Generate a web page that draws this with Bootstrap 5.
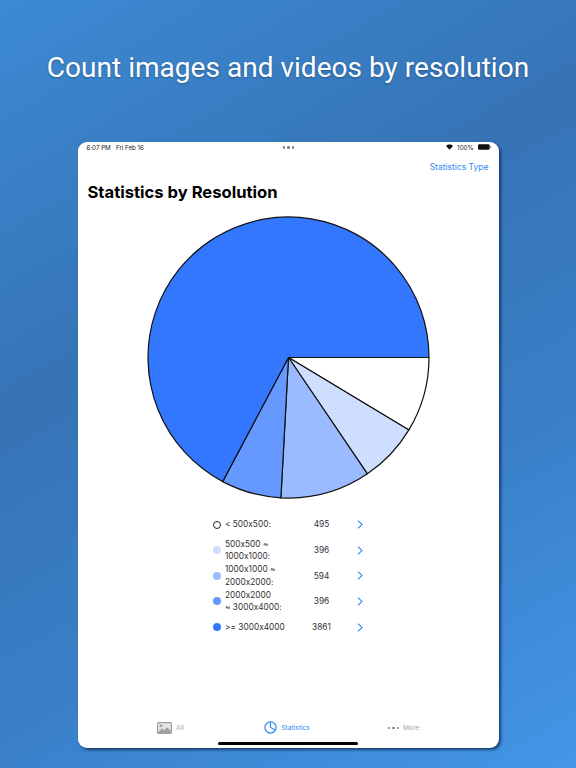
<!DOCTYPE html>
<html lang="en">
<head>
<meta charset="utf-8">
<title>Statistics by Resolution</title>
<link rel="stylesheet" href="https://cdn.jsdelivr.net/npm/bootstrap@5.3.0/dist/css/bootstrap.min.css">
<style>
html, body { height: 768px; overflow: hidden; }
body { width: 576px; background: linear-gradient(150deg, #3c8ad4 0%, #3673b5 38%, #3a80c9 68%, #4496e8 100%); font-family: Inter, "Liberation Sans", sans-serif; font-feature-settings: "calt" 0; }
.headline { height: 141.5px; padding-top: 48px; margin: 0; font: 400 28.05px/40px Roboto, sans-serif; color: #fff; text-align: center; text-shadow: 0 1px 2px rgba(0,0,0,.3); }
.tablet { width: 421px; height: 606px; margin-left: 77.5px; border-radius: 9px; background: #fff; box-shadow: 2px 2px 3px rgba(10,40,80,.75); }
.statusline { height: 12px; padding: 0 8px 0 9px; font-size: 6.2px; color: #222; }
.statusline > * { flex: 1 1 0; }
.dotset { gap: 2px; }
.dotset i { width: 2.4px; height: 2.4px; border-radius: 50%; background: #808080; }
.actionlink { font-size: 8.5px; line-height: 12px; color: #2f8cf5; text-decoration: none; padding: 7px 10px 0 0; }
.sheet-title { font-size: 16.6px; line-height: 22px; font-weight: 700; color: #000; margin: 8.5px 0 0 10px; }
.piewrap { margin-top: 12.5px; height: 283px; }
.legend-grid { width: 170px; margin: 13.4px 0 0 130.5px; font-size: 8.3px; line-height: 12.4px; color: #333; }
.legend-item { height: 25.6px; }
.swatch { width: 8px; height: 8px; border-radius: 50%; flex: none; margin: 0 4px 0 5px; }
.swatch-b { background: #cddeff; }
.swatch-c { background: #9abbff; }
.swatch-d { background: #6699ff; }
.swatch-e { background: #3377ff; }
.swatch-name { width: 69px; flex: none; }
.swatch-num { width: 55px; flex: none; text-align: center; }
.trail { margin-left: 8px; flex: none; }
.tabbar { width: 350px; margin: 76.1px 0 0 34.5px; height: 24px; font-size: 6.7px; color: #a8a8a8; }
.tab-cell { flex: 1 1 0; gap: 4px; }
.tab-on { color: #2f8cf5; }
.home-bar { width: 140px; height: 3px; border-radius: 2px; background: #000; margin: 2px auto 0; }
</style>
</head>
<body>
<h1 class="headline">Count images and videos by resolution</h1>
<main class="tablet overflow-hidden">
  <div class="statusline d-flex align-items-center">
    <span>6:07 PM&nbsp;&nbsp; Fri Feb 16</span>
    <span class="dotset d-flex justify-content-center"><i></i><i></i><i></i></span>
    <span class="d-flex justify-content-end align-items-center gap-1">
      <svg width="7" height="6" viewBox="0 0 16 12"><path d="M8 12 0 3.6C4.500-.9 11.500-.9 16 3.600Z" fill="#111"/></svg>
      <span>100%</span>
      <svg width="13" height="6" viewBox="0 0 14 6"><rect width="12.500" height="6" rx="1.500" fill="#111"/><rect x="13" y="2" width="1" height="2" fill="#777"/></svg>
    </span>
  </div>
  <div class="d-flex justify-content-end"><a class="actionlink" href="#">Statistics Type</a></div>
  <h2 class="sheet-title">Statistics by Resolution</h2>
  <div class="piewrap d-flex justify-content-center">
    <svg width="283" height="283" viewBox="0 0 283 283" role="img" aria-label="Pie chart">
      <g stroke="#111" stroke-width="1.200" stroke-linejoin="round" transform="translate(141.500 141.500)">
        <path d="M0 0H140.500A140.500 140.500 0 0 1 120.400 72.400Z" fill="#fff"/>
        <path d="M0 0L120.400 72.400A140.500 140.500 0 0 1 78.900 116.300Z" fill="#cddeff"/>
        <path d="M0 0L78.900 116.300A140.500 140.500 0 0 1 -7.600 140.300Z" fill="#9abbff"/>
        <path d="M0 0L-7.600 140.300A140.500 140.500 0 0 1 -65.800 124.100Z" fill="#6699ff"/>
        <path d="M0 0L-65.800 124.100A140.500 140.500 0 1 1 140.500 0Z" fill="#3377ff"/>
      </g>
    </svg>
  </div>
  <div class="legend-grid">
    <div class="legend-item d-flex align-items-center"><span class="swatch border border-dark bg-white"></span><span class="swatch-name">&lt; 500x500:</span><span class="swatch-num">495</span><svg class="trail" width="6" height="9" viewBox="0 0 6 9"><path d="M1 .7 5 4.500 1 8.300" fill="none" stroke="#2f8cf5" stroke-width="1.100"/></svg></div>
    <div class="legend-item d-flex align-items-center"><span class="swatch swatch-b"></span><span class="swatch-name">500x500 ~ 1000x1000:</span><span class="swatch-num">396</span><svg class="trail" width="6" height="9" viewBox="0 0 6 9"><path d="M1 .7 5 4.500 1 8.300" fill="none" stroke="#2f8cf5" stroke-width="1.100"/></svg></div>
    <div class="legend-item d-flex align-items-center"><span class="swatch swatch-c"></span><span class="swatch-name">1000x1000 ~ 2000x2000:</span><span class="swatch-num">594</span><svg class="trail" width="6" height="9" viewBox="0 0 6 9"><path d="M1 .7 5 4.500 1 8.300" fill="none" stroke="#2f8cf5" stroke-width="1.100"/></svg></div>
    <div class="legend-item d-flex align-items-center"><span class="swatch swatch-d"></span><span class="swatch-name">2000x2000<br>~ 3000x4000:</span><span class="swatch-num">396</span><svg class="trail" width="6" height="9" viewBox="0 0 6 9"><path d="M1 .7 5 4.500 1 8.300" fill="none" stroke="#2f8cf5" stroke-width="1.100"/></svg></div>
    <div class="legend-item d-flex align-items-center"><span class="swatch swatch-e"></span><span class="swatch-name text-nowrap">&gt;= 3000x4000</span><span class="swatch-num">3861</span><svg class="trail" width="6" height="9" viewBox="0 0 6 9"><path d="M1 .7 5 4.500 1 8.300" fill="none" stroke="#2f8cf5" stroke-width="1.100"/></svg></div>
  </div>
  <nav class="tabbar d-flex align-items-center">
    <div class="tab-cell d-flex align-items-center justify-content-center">
      <svg width="15" height="12" viewBox="0 0 15 12"><rect width="15" height="12" rx="1.500" fill="#a0a0a0"/><rect x="1.200" y="1.200" width="12.600" height="9.600" fill="#e4e4e4"/><circle cx="4" cy="3.800" r="1.400" fill="#a0a0a0"/><path d="M1.200 10 5 6.200l2 2 3-3 3.800 3.800v2H1.200Z" fill="#a0a0a0"/></svg>
      <span>All</span>
    </div>
    <div class="tab-cell tab-on d-flex align-items-center justify-content-center">
      <svg width="13" height="13" viewBox="0 0 13 13" fill="none" stroke="#2f8cf5" stroke-width="1.200"><circle cx="6.500" cy="6.500" r="5.600"/><path d="M6.500 1V6.500L11.500 9"/></svg>
      <span>Statistics</span>
    </div>
    <div class="tab-cell d-flex align-items-center justify-content-center">
      <span class="dotset d-flex"><i></i><i></i><i></i></span>
      <span>More</span>
    </div>
  </nav>
  <div class="home-bar"></div>
</main>
</body>
</html>
